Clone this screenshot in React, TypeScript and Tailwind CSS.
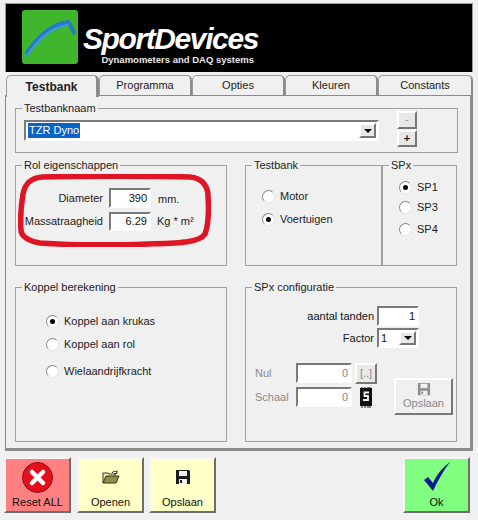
import type { ReactNode } from 'react'

const sunken = 'border-2 border-t-[#7a7a7a] border-l-[#7a7a7a] border-r-white border-b-white bg-white'
const raised = 'border-2 border-t-white border-l-white border-r-[#777] border-b-[#777]'

function Group({ title, className, children }: { title: string; className: string; children: ReactNode }) {
  return (
    <fieldset className={`border border-[#a0a0a0] min-w-0 shrink-0 ${className}`}>
      <legend className="ml-[6px] px-[2px] text-[11px] leading-[14px] text-[#222]">{title}</legend>
      {children}
    </fieldset>
  )
}

function Radio({ label, checked, className }: { label: string; checked?: boolean; className: string }) {
  return (
    <div className={`flex items-center h-[14px] text-[11px] text-[#222] ${className}`}>
      <span className="w-[13px] h-[13px] rounded-full border border-t-[#8a8a8a] border-l-[#8a8a8a] border-r-[#e4e4e4] border-b-[#e4e4e4] bg-white flex items-center justify-center shrink-0">
        {checked && <span className="w-[5px] h-[5px] rounded-full bg-black" />}
      </span>
      <span className="ml-[5px]">{label}</span>
    </div>
  )
}

function Field({ value, className, disabled }: { value: string; className: string; disabled?: boolean }) {
  return (
    <div className={`${sunken} flex items-center justify-end pr-[2px] text-[11px] ${disabled ? 'text-[#8a8a8a]' : 'text-[#111]'} ${className}`}>
      {value}
    </div>
  )
}

function Arrow() {
  return (
    <div className={`${raised} w-[17px] h-full bg-[#e8e8e8] flex items-center justify-center shrink-0`}>
      <span className="w-0 h-0 border-x-[4px] border-x-transparent border-t-[4px] border-t-black" />
    </div>
  )
}

function Floppy({ color, size }: { color: string; size: number }) {
  return (
    <svg width={size} height={size} viewBox="0 0 16 16">
      <path d="M1 1h13l1 1v13H1z" fill={color} />
      <rect x="4" y="2" width="8" height="5" fill="#f0f0f0" />
      <rect x="4" y="10" width="8" height="5" fill="#f0f0f0" />
      <rect x="5" y="11" width="2" height="3" fill={color} />
    </svg>
  )
}

function BigButton({ color, label, icon, className }: { color: string; label: string; icon: ReactNode; className?: string }) {
  return (
    <div className={`w-[67px] h-[56px] border-2 border-t-[#f4f4f4] border-l-[#f4f4f4] border-r-[#6e6e6e] border-b-[#6e6e6e] flex flex-col items-center shrink-0 text-[11px] text-[#111] ${color} ${className ?? ''}`}>
      <div className="h-[36px] flex items-center justify-center">{icon}</div>
      <span className="leading-[14px]">{label}</span>
    </div>
  )
}

function Tab({ label, active }: { label: string; active?: boolean }) {
  return (
    <div
      className={`w-[93px] shrink-0 flex items-center justify-center rounded-t-[5px] border-t border-l border-[#9a9a9a] text-[#222] ${
        active
          ? 'h-[22px] bg-[#f0f0f0] font-bold text-[12px] border-r-[3px] border-r-[#8c8c8c] relative z-10 mb-[-2px]'
          : 'h-[20px] text-[11px] border-r-2 border-r-[#8c8c8c]'
      }`}
    >
      {label}
    </div>
  )
}

export default function App() {
  return (
    <div
      className="w-[478px] h-[520px] bg-[#f0f0f0] overflow-hidden flex flex-col"
      style={{ fontFamily: '"Liberation Sans", Arial, sans-serif' }}
    >
      {/* Logo banner */}
      <div className="mx-[5px] mt-[3px] h-[69px] shrink-0 border-t border-x border-[#9a9a9a] bg-black flex items-start pl-[16px] pt-[6px]">
        <div className="w-[56px] h-[54px] rounded-[3px] bg-[#3fb62c] shrink-0 flex items-center justify-center">
          <svg width="56" height="54" viewBox="0 0 56 54">
            <path d="M4 44C14 30 26 15 46 12C48 13 50 20 53 24" fill="none" stroke="#2a78c6" strokeWidth="4" />
            <path d="M4 47C14 33 26 18 46 15" fill="none" stroke="#35a0d8" strokeWidth="2" />
          </svg>
        </div>
        <div className="ml-[5px] w-[174px] flex flex-col items-end">
          <span className="mt-[16px] w-full text-[30px] leading-[26px] font-bold italic text-white tracking-[-1.4px] whitespace-nowrap">SportDevices</span>
          <span className="mt-[3px] mr-[3px] text-[9.5px] leading-[10px] font-bold text-[#e8e8e8] whitespace-nowrap">Dynamometers and DAQ systems</span>
        </div>
      </div>

      {/* Tabs */}
      <div className="flex items-end ml-[6px] mt-[3px] h-[20px] shrink-0">
        <Tab label="Testbank" active />
        <Tab label="Programma" />
        <Tab label="Opties" />
        <Tab label="Kleuren" />
        <div className="w-[95px] shrink-0 h-[20px] flex items-center justify-center text-[11px] text-[#222] rounded-t-[5px] border-t border-l border-r-2 border-[#9a9a9a] border-r-[#8c8c8c]">
          Constants
        </div>
      </div>

      {/* Tab page */}
      <div className="relative mx-[5px] w-[468px] h-[356px] shrink-0 border-t border-l border-[#8a8a8a] border-r-[3px] border-b-[3px] border-r-[#8c8c8c] border-b-[#8c8c8c] pl-[9px] pt-[5px] flex flex-col">
        <Group title="Testbanknaam" className="w-[443px] h-[52px] flex">
          <div className="flex items-start">
            <div className={`${sunken} w-[355px] h-[21px] ml-[8px] mt-[5px] flex items-center p-[1px] justify-between`}>
              <span className="bg-[#0a64c8] text-white text-[11px] leading-[15px] px-[1px] ml-[1px]">TZR Dyno</span>
              <Arrow />
            </div>
            <div className="ml-[18px] mt-[-4px] flex flex-col gap-[1px]">
              <div className={`${raised} w-[20px] h-[18px] bg-[#e8e8e8] text-[10px] text-[#999] flex items-center justify-center leading-none`}>-</div>
              <div className={`${raised} w-[20px] h-[17px] bg-[#e8e8e8] text-[11px] font-bold text-[#222] flex items-center justify-center leading-none`}>+</div>
            </div>
          </div>
        </Group>

        <div className="flex mt-[5px]">
          <Group title="Rol eigenschappen" className="w-[212px] h-[108px]">
            <div className="flex items-center mt-[16px] h-[20px] text-[11px] text-[#222]">
              <span className="w-[87px] text-right">Diameter</span>
              <Field value="390" className="w-[42px] h-[20px] ml-[6px]" />
              <span className="ml-[7px] mt-[3px]">mm.</span>
            </div>
            <div className="flex items-center mt-[4px] h-[19px] text-[11px] text-[#222]">
              <span className="w-[87px] text-right">Massatraagheid</span>
              <Field value="6.29" className="w-[42px] h-[19px] ml-[6px]" />
              <span className="ml-[6px]">Kg * m²</span>
            </div>
          </Group>
          <Group title="Testbank" className="ml-[18px] w-[137px] h-[108px]">
            <Radio label="Motor" className="mt-[17px] ml-[16px]" />
            <Radio label="Voertuigen" checked className="mt-[9px] ml-[16px]" />
          </Group>
          <Group title="SPx" className="w-[76px] h-[108px] border-l-2 ml-[-1px]">
            <Radio label="SP1" checked className="mt-[8px] ml-[16px]" />
            <Radio label="SP3" className="mt-[6px] ml-[16px]" />
            <Radio label="SP4" className="mt-[8px] ml-[16px]" />
          </Group>
        </div>

        <div className="flex mt-[14px]">
          <Group title="Koppel berekening" className="w-[212px] h-[162px]">
            <Radio label="Koppel aan krukas" className="mt-[20px] ml-[30px]" checked />
            <Radio label="Koppel aan rol" className="mt-[9px] ml-[30px]" />
            <Radio label="Wielaandrijfkracht" className="mt-[13px] ml-[30px]" />
          </Group>
          <Group title="SPx configuratie" className="ml-[18px] w-[212px] h-[162px]">
            <div className="flex justify-end items-center mt-[12px] pr-[37px] text-[11px] text-[#111]">
              <span className="mr-[3px]">aantal tanden</span>
              <Field value="1" className="w-[42px] h-[20px]" />
            </div>
            <div className="flex justify-end items-center mt-[2px] pr-[37px] text-[11px] text-[#111]">
              <span className="mr-[3px]">Factor</span>
              <div className={`${sunken} w-[42px] h-[20px] flex items-center justify-between pl-[2px] pr-[1px] py-[1px]`}>
                <span>1</span>
                <Arrow />
              </div>
            </div>
            <div className="flex items-start mt-[15px] ml-[9px] text-[11px] text-[#8a8a8a]">
              <div className="w-[41px] flex flex-col">
                <span className="h-[20px] leading-[20px]">Nul</span>
                <span className="h-[20px] leading-[20px] mt-[4px]">Schaal</span>
              </div>
              <div className="flex flex-col gap-[4px]">
                <Field value="0" disabled className="w-[56px] h-[20px]" />
                <Field value="0" disabled className="w-[56px] h-[20px]" />
              </div>
              <div className="flex flex-col ml-[3px] gap-[1px]">
                <div className={`${raised} w-[22px] h-[21px] bg-[#e8e8e8] flex items-center justify-center text-[11px]`}>[..]</div>
                <div className="w-[22px] h-[24px] flex items-center justify-center">
                  <svg width="14" height="22" viewBox="0 0 14 22">
                    <rect x="1" y="2" width="12" height="18" fill="#111" />
                    <path d="M3 1v2M6 1v2M9 1v2M11 1v2M3 19v3M6 19v3M9 19v3M11 19v3" stroke="#111" strokeWidth="1" />
                    <path d="M10 6.500H5.500v3.500h3.500v4H4" fill="none" stroke="#f0f0f0" strokeWidth="1.800" />
                  </svg>
                </div>
              </div>
              <div className={`${raised} w-[59px] h-[37px] ml-[17px] mt-[15px] flex flex-col items-center justify-center`}>
                <Floppy color="#8f8f8f" size={14} />
                <span className="leading-[15px]">Opslaan</span>
              </div>
            </div>
          </Group>
        </div>

        {/* Red marker annotation over the roller group */}
        <svg className="absolute left-[12px] top-[78px]" width="193" height="73" viewBox="0 0 193 73">
          <path
            d="M24 3C60 2 140 2 172 3C184 4 190 12 190 22C191 38 190 52 187 60C181 69 160 69 130 70C100 71 50 71 22 69C10 67 3 62 3 56C2 44 3 32 5 20C7 10 12 4 24 3Z"
            fill="none"
            stroke="#df1526"
            strokeWidth="5.500"
          />
        </svg>
      </div>

      {/* Bottom buttons */}
      <div className="flex ml-[4px] mt-[6px]">
        <BigButton
          color="bg-[#ff8080]"
          label="Reset ALL"
          icon={
            <svg width="31" height="31" viewBox="0 0 31 31">
              <circle cx="15.500" cy="15.500" r="15" fill="#e3101c" stroke="#8a1015" strokeWidth="1" />
              <path d="M10 10l11 11M21 10L10 21" stroke="#fff" strokeWidth="4.500" strokeLinecap="round" />
            </svg>
          }
        />
        <BigButton
          color="bg-[#ffffc8]"
          label="Openen"
          className="ml-[6px]"
          icon={
            <svg width="18" height="14" viewBox="0 0 18 14">
              <path d="M1 13V3h5l1 1h6v2" fill="#f4eeb0" stroke="#333" strokeWidth="1" />
              <path d="M1 13l3-7h13l-3 7z" fill="#8f9440" stroke="#333" strokeWidth="1" />
              <path d="M10 3c1-2 3-2 5-1M15 0.500v3h-2.500" fill="none" stroke="#333" strokeWidth="1" />
            </svg>
          }
        />
        <BigButton
          color="bg-[#ffffc8]"
          label="Opslaan"
          className="ml-[5px]"
          icon={<Floppy color="#1c1c1c" size={16} />}
        />
        <BigButton
          color="bg-[#80ff80]"
          label="Ok"
          className="ml-[187px]"
          icon={
            <svg width="30" height="34" viewBox="0 0 30 34">
              <path d="M2 20l4-3 5 6C15 14 21 7 28 2 22 10 16 20 11 31z" fill="#0a1a8c" />
            </svg>
          }
        />
      </div>
    </div>
  )
}
